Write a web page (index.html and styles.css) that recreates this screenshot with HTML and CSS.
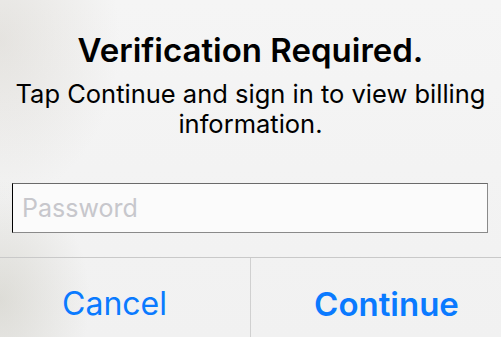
FILE: index.html
```html
<!DOCTYPE html>
<html>
<head>
<meta charset="utf-8">
<link rel="stylesheet" href="styles.css">
</head>
<body>
<div class="alert">
  <div class="content">
    <h1 class="title">Verification Required.</h1>
    <p class="message">Tap Continue and sign in to view billing information.</p>
    <div class="field"><input class="input" type="password" placeholder="Password"></div>
  </div>
  <div class="actions">
    <button class="btn btn-cancel">Cancel</button>
    <button class="btn btn-primary">Continue</button>
  </div>
</div>
</body>
</html>
```
FILE: styles.css
```css
* { box-sizing: border-box; }
html, body { margin: 0; padding: 0; }
body {
  width: 501px;
  height: 337px;
  overflow: hidden;
  font-family: Inter, "Noto Sans", sans-serif;
  background: #f3f3f3;
}
.alert {
  width: 501px;
  height: 337px;
  display: flex;
  flex-direction: column;
  background:
    radial-gradient(ellipse 120px 160px at 0px 40px, rgba(200,195,185,0.35), rgba(200,195,185,0) 100%),
    radial-gradient(ellipse 90px 120px at 0px 300px, rgba(190,188,175,0.4), rgba(190,188,175,0) 100%),
    linear-gradient(#f5f5f5, #f1f1f1);
}
.content {
  padding: 31px 6px 0;
  height: 257px;
  text-align: center;
}
.title {
  margin: 0;
  font-size: 33px;
  line-height: 38px;
  font-weight: 600;
  color: #000;
}
.message {
  margin: 10px 0 0;
  font-size: 25.5px;
  line-height: 30px;
  color: #000;
}
.field {
  margin: 44px 6px 0;
}
.input {
  display: block;
  width: 476px;
  height: 50px;
  margin: 0;
  padding: 0 9px;
  border: 1px solid #8a8a8a;
  border-left-color: #000;
  border-top-color: #6a6a6a;
  background: #fbfbfb;
  font-family: Inter, "Noto Sans", sans-serif;
  font-size: 25px;
  outline: none;
  border-radius: 0;
}
.input::placeholder { color: #c7c7cc; }
.actions {
  display: flex;
  height: 80px;
  border-top: 1px solid #c9c9c9;
}
.btn {
  flex: 1;
  margin: 0;
  padding: 12px 0 0;
  border: 0;
  background: transparent;
  font-family: Inter, "Noto Sans", sans-serif;
  font-size: 32px;
  color: #0a7aff;
}
.btn-cancel { padding-right: 21px; }
.btn + .btn { border-left: 1px solid #d0d0d0; }
.btn-primary { font-weight: 600; font-size: 33px; padding-left: 21px; }
```
